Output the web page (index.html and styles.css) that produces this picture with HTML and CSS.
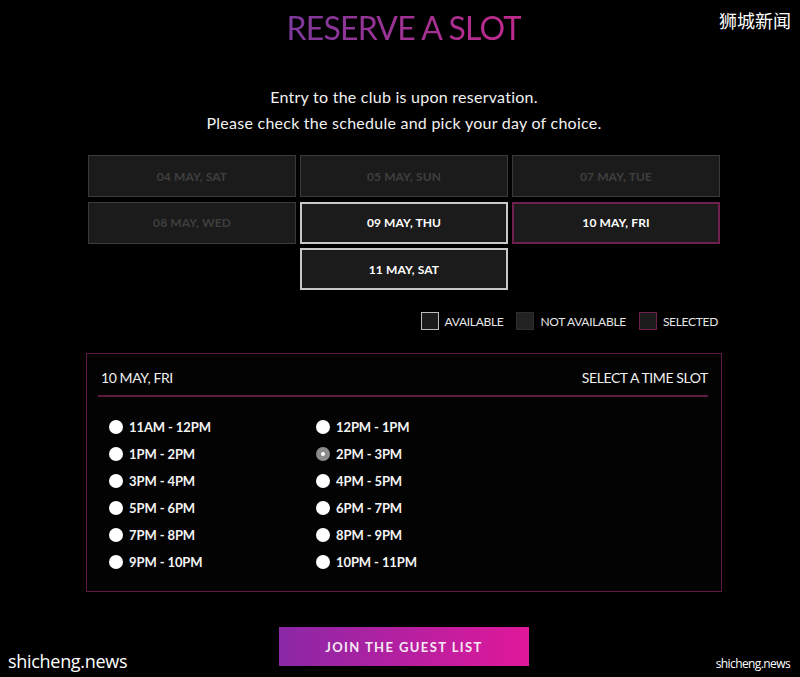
FILE: index.html
```html
<!DOCTYPE html>
<html lang="en">
<head>
<meta charset="utf-8">
<link rel="stylesheet" href="styles.css">
</head>
<body>
<div class="page">
  <h1 class="title">RESERVE A SLOT</h1>
  <p class="intro">Entry to the club is upon reservation.<br>Please check the schedule and pick your day of choice.</p>

  <div class="days">
    <div class="day na">04 MAY, SAT</div>
    <div class="day na">05 MAY, SUN</div>
    <div class="day na">07 MAY, TUE</div>
    <div class="day na">08 MAY, WED</div>
    <div class="day avail">09 MAY, THU</div>
    <div class="day sel">10 MAY, FRI</div>
    <div class="day avail span2">11 MAY, SAT</div>
  </div>

  <div class="legend">
    <span class="lg"><span class="box b-avail"></span>AVAILABLE</span>
    <span class="lg"><span class="box b-na"></span>NOT AVAILABLE</span>
    <span class="lg"><span class="box b-sel"></span>SELECTED</span>
  </div>

  <div class="panel">
    <div class="panel-head">
      <span>10 MAY, FRI</span>
      <span>SELECT A TIME SLOT</span>
    </div>
    <div class="slots">
      <div class="slot"><span class="radio"></span>11AM - 12PM</div>
      <div class="slot"><span class="radio"></span>12PM - 1PM</div>
      <div class="slot"><span class="radio"></span>1PM - 2PM</div>
      <div class="slot"><span class="radio checked"></span>2PM - 3PM</div>
      <div class="slot"><span class="radio"></span>3PM - 4PM</div>
      <div class="slot"><span class="radio"></span>4PM - 5PM</div>
      <div class="slot"><span class="radio"></span>5PM - 6PM</div>
      <div class="slot"><span class="radio"></span>6PM - 7PM</div>
      <div class="slot"><span class="radio"></span>7PM - 8PM</div>
      <div class="slot"><span class="radio"></span>8PM - 9PM</div>
      <div class="slot"><span class="radio"></span>9PM - 10PM</div>
      <div class="slot"><span class="radio"></span>10PM - 11PM</div>
    </div>
  </div>

  <div class="btn-row"><button class="btn">JOIN THE GUEST LIST</button></div>
</div>

<div class="wm-cn">狮城新闻</div>
<div class="wm-left">shicheng.news</div>
<div class="wm-right">shicheng.news</div>
</body>
</html>
```

FILE: styles.css
```css
html, body {
  margin: 0;
  padding: 0;
  background: #000;
  height: 677px;
  overflow: hidden;
}
body {
  font-family: "Lato", "Open Sans", sans-serif;
  color: #fff;
  position: relative;
}
.page {
  width: 636px;
  margin-left: 86px;
  display: flex;
  flex-direction: column;
}
.title {
  margin: 8px 0 0 0;
  text-align: center;
  font-weight: 400;
  font-size: 32px;
  line-height: 40px;
  letter-spacing: -0.8px;
  background: linear-gradient(90deg, #7d3a9c, #c02a8c);
  -webkit-background-clip: text;
  background-clip: text;
  color: transparent;
  align-self: center;
}
.intro {
  margin: 36px 0 0 0;
  text-align: center;
  font-size: 16px;
  line-height: 26px;
  letter-spacing: 0.25px;
  color: #f2f2f2;
}
.days {
  margin: 19px 2px 0 2px;
  display: grid;
  grid-template-columns: repeat(3, 1fr);
  column-gap: 4px;
  row-gap: 4.5px;
}
.day {
  height: 42px;
  box-sizing: border-box;
  background: #1b1b1b;
  border: 1px solid #3a3a3a;
  display: flex;
  align-items: center;
  justify-content: center;
  font-size: 12px;
  font-weight: 700;
  letter-spacing: 0.1px;
}
.day.na { color: #3f3f3f; }
.day.avail { border: 2px solid #c8c8c8; color: #fff; }
.day.sel { border: 2px solid #6e1f4c; color: #fff; }
.day.span2 { grid-column: 2; }
.legend {
  margin-top: 22px;
  display: flex;
  justify-content: flex-end;
  gap: 13px;
  padding-right: 4px;
  font-size: 12px;
  letter-spacing: -0.3px;
  color: #e6e6e6;
}
.lg {
  display: flex;
  align-items: center;
  gap: 6px;
}
.box {
  width: 18px;
  height: 18px;
  box-sizing: border-box;
  background: #1b1b1b;
}
.b-avail { border: 1px solid #bdbdbd; }
.b-na { border: 1px solid #2e2e2e; background: #222; }
.b-sel { border: 1px solid #6e1f4c; }
.panel {
  margin-top: 23px;
  height: 239px;
  box-sizing: border-box;
  border: 1px solid #5e1a40;
  background: #030303;
  padding: 12px 13px 0 11px;
}
.panel-head {
  display: flex;
  justify-content: space-between;
  font-size: 14px;
  letter-spacing: -0.4px;
  color: #f0f0f0;
  padding: 3px 0 9px 3px;
  border-bottom: 2px solid #5e1a40;
}
.slots {
  margin-top: 20px;
  padding-left: 11px;
  display: grid;
  grid-template-columns: 207px 207px;
  row-gap: 8px;
}
.slot {
  display: flex;
  align-items: center;
  gap: 6px;
  font-size: 13px;
  font-weight: 700;
  letter-spacing: -0.1px;
  height: 19px;
  color: #f4f4f4;
}
.radio {
  width: 14px;
  height: 14px;
  border-radius: 50%;
  background: #fff;
  display: inline-block;
  flex: none;
  position: relative;
}
.radio.checked {
  background: #8c8c8c;
}
.radio.checked::after {
  content: "";
  position: absolute;
  left: 5px;
  top: 5px;
  width: 4px;
  height: 4px;
  border-radius: 50%;
  background: #fff;
}
.btn-row {
  margin-top: 35px;
  display: flex;
  justify-content: center;
}
.btn {
  width: 250px;
  height: 39px;
  border: none;
  background: linear-gradient(90deg, #8a28a6, #e0189a);
  color: #f6e8f4;
  font-family: "Lato", sans-serif;
  font-weight: 700;
  font-size: 13px;
  letter-spacing: 1.4px;
}
.wm-cn {
  position: absolute;
  right: 9px;
  top: 7px;
  font-family: "Noto Sans CJK SC", sans-serif;
  font-size: 18px;
  color: #fff;
}
.wm-left {
  position: absolute;
  left: 8px;
  top: 649px;
  font-family: "Open Sans", sans-serif;
  font-size: 18px;
  color: #fff;
  letter-spacing: -0.3px;
}
.wm-right {
  position: absolute;
  right: 10px;
  top: 655px;
  font-family: "Open Sans", sans-serif;
  font-size: 12px;
  color: #fff;
  letter-spacing: -0.6px;
}
```
